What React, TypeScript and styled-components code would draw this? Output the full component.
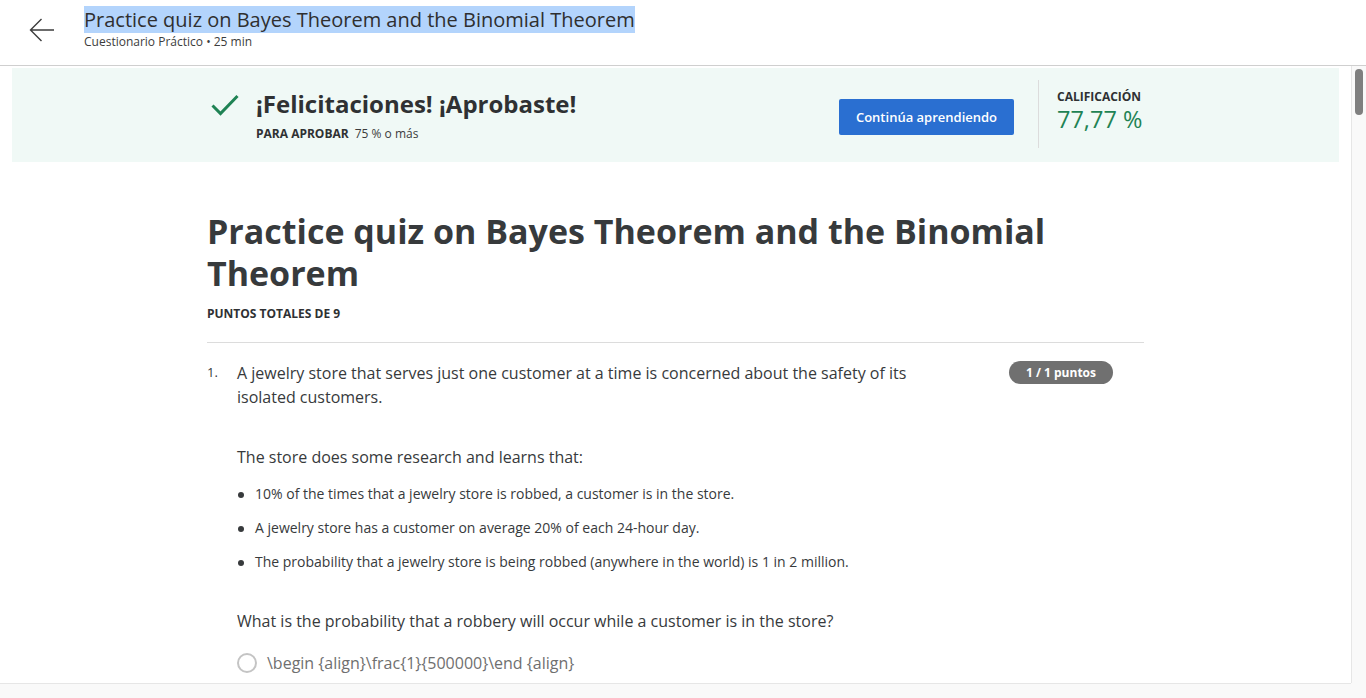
import React from "react";
import styled, { createGlobalStyle } from "styled-components";

const Global = createGlobalStyle`
  html, body { margin: 0; padding: 0; height: 100%; overflow: hidden; }
  body { font-family: "Open Sans", "Noto Sans", sans-serif; color: #373a3c; background: #fff; }
  * { box-sizing: border-box; }
`;

const Shell = styled.div`
  display: flex;
  flex-direction: column;
  height: 698px;
  width: 1366px;
`;

const Header = styled.header`
  flex: 0 0 66px;
  display: flex;
  align-items: flex-start;
  border-bottom: 1px solid #cfcfcf;
  padding: 8px 0 0 28px;
`;

const BackButton = styled.button`
  border: 0;
  background: none;
  padding: 0;
  margin: 9px 28px 0 0;
  width: 28px;
  height: 26px;
  display: flex;
  align-items: center;
  justify-content: center;
  color: #3d3d3d;
  cursor: pointer;
`;

const HeaderText = styled.div`
  display: flex;
  flex-direction: column;
`;

const HeaderTitle = styled.h1`
  margin: 0;
  font-size: 20px;
  line-height: 24px;
  font-weight: 400;
  color: #2f2f2f;
  span { background: #b3d4fc; }
`;

const HeaderSub = styled.div`
  font-size: 12px;
  line-height: 16px;
  color: #3c3c3c;
  margin-top: 2px;
`;

const Viewport = styled.div`
  flex: 1;
  min-height: 0;
  display: grid;
  grid-template-columns: 1fr 15px;
  grid-template-rows: 1fr 15px;
`;

const Pane = styled.main`
  overflow: hidden;
  min-height: 0;
`;

const VTrack = styled.div`
  background: #f9f9f9;
  border-left: 1px solid #e6e6e6;
  padding: 3px 3px 0 3px;
`;

const VThumb = styled.div`
  height: 46px;
  border-radius: 4px;
  background: #7f7f7f;
`;

const HTrack = styled.div`
  background: #f9f9f9;
  border-top: 1px solid #e6e6e6;
`;

const Corner = styled.div`
  background: #f9f9f9;
`;

const Banner = styled.section`
  margin: 2px 12px 0 12px;
  background: #f0f9f6;
  height: 94px;
  display: flex;
  justify-content: center;
`;

const BannerInner = styled.div`
  width: 937px;
  display: flex;
  align-items: stretch;
`;

const PassBlock = styled.div`
  flex: 1;
  display: flex;
  align-items: flex-start;
  padding-top: 22px;
`;

const CheckWrap = styled.div`
  width: 49px;
  padding: 4px 0 0 4px;
  color: #1f8354;
`;

const PassText = styled.div`
  display: flex;
  flex-direction: column;
`;

const PassTitle = styled.h2`
  margin: 0;
  font-size: 24px;
  line-height: 28px;
  font-weight: 700;
  color: #2f3133;
`;

const PassMeta = styled.div`
  margin-top: 8px;
  font-size: 12px;
  line-height: 16px;
  color: #3c3c3c;
  b { font-weight: 700; margin-right: 6px; color: #2f3133; }
`;

const ActionBlock = styled.div`
  display: flex;
  align-items: center;
  padding-right: 24px;
  padding-top: 4px;
`;

const PrimaryButton = styled.button`
  width: 175px;
  height: 36px;
  border: 0;
  border-radius: 2px;
  background: #2a6fd1;
  color: #fff;
  font-family: inherit;
  font-size: 13px;
  font-weight: 600;
  cursor: pointer;
`;

const GradeBlock = styled.div`
  border-left: 1px solid #dcdcdc;
  margin: 12px 0 14px;
  padding: 9px 0 0 18px;
  width: 106px;
  white-space: nowrap;
`;

const GradeLabel = styled.div`
  font-size: 12px;
  line-height: 16px;
  font-weight: 700;
  color: #2f3133;
`;

const GradeValue = styled.div`
  font-size: 23.5px;
  line-height: 28px;
  color: #1f8354;
`;

const Article = styled.article`
  width: 937px;
  margin: 0 auto;
  padding-top: 48px;
`;

const QuizTitle = styled.h1`
  margin: 0;
  font-size: 34px;
  line-height: 42px;
  font-weight: 700;
  color: #373a3c;
`;

const TotalPoints = styled.div`
  margin-top: 12px;
  font-size: 12px;
  line-height: 16px;
  font-weight: 700;
  color: #2f3133;
  padding-bottom: 20px;
  border-bottom: 1px solid #dcdcdc;
`;

const Question = styled.div`
  display: flex;
  padding-top: 18px;
`;

const QNum = styled.div`
  width: 30px;
  font-size: 13px;
  line-height: 24px;
  color: #373a3c;
  margin-top: -1px;
`;

const QBody = styled.div`
  flex: 1;
  font-size: 16px;
  line-height: 24px;
  color: #373a3c;
`;

const QTop = styled.div`
  display: flex;
  justify-content: space-between;
  align-items: flex-start;
`;

const Prompt = styled.p`
  margin: 0;
  width: 680px;
`;

const Badge = styled.span`
  margin: 0 31px 0 0;
  height: 23px;
  padding: 0 17px;
  border-radius: 12px;
  background: #707070;
  color: #fff;
  font-size: 12px;
  font-weight: 700;
  line-height: 23px;
`;

const Para = styled.p<{ $top?: number }>`
  margin: ${(p) => p.$top ?? 36}px 0 0;
`;

const Bullets = styled.ul`
  margin: 15px 0 0;
  padding: 0 0 0 18px;
  list-style: none;
  font-size: 14px;
  line-height: 20px;
  li { position: relative; margin-bottom: 14px; }
  li::before {
    content: "";
    position: absolute;
    left: -17px;
    top: 8px;
    width: 6px;
    height: 6px;
    border-radius: 50%;
    background: #373a3c;
  }
`;

const Options = styled.div`
  margin-top: 18px;
  display: flex;
  flex-direction: column;
  gap: 16px;
`;

const Option = styled.label`
  display: flex;
  align-items: center;
  gap: 10px;
  color: #6f6f6f;
  font-size: 16px;
  line-height: 24px;
`;

const Radio = styled.span`
  width: 20px;
  height: 20px;
  border: 2px solid #c4c4c4;
  border-radius: 50%;
  background: #fff;
  flex: 0 0 20px;
`;

export default function App() {
  return (
    <>
      <Global />
      <Shell>
        <Header>
          <BackButton aria-label="Atrás">
            <svg width="26" height="24" viewBox="0 0 26 24" fill="none" stroke="currentColor" strokeWidth="1.4">
              <path d="M25 12H1.5M12.5 1L1.5 12l11 11" />
            </svg>
          </BackButton>
          <HeaderText>
            <HeaderTitle><span>Practice quiz on Bayes Theorem and the Binomial Theorem</span></HeaderTitle>
            <HeaderSub>Cuestionario Práctico • 25 min</HeaderSub>
          </HeaderText>
        </Header>
        <Viewport>
          <Pane>
            <Banner>
              <BannerInner>
                <PassBlock>
                  <CheckWrap>
                    <svg width="28" height="22" viewBox="0 0 28 22" fill="none" stroke="currentColor" strokeWidth="3">
                      <path d="M1.5 11.5l8 8L26.5 2" />
                    </svg>
                  </CheckWrap>
                  <PassText>
                    <PassTitle>¡Felicitaciones! ¡Aprobaste!</PassTitle>
                    <PassMeta><b>PARA APROBAR</b>75 % o más</PassMeta>
                  </PassText>
                </PassBlock>
                <ActionBlock>
                  <PrimaryButton>Continúa aprendiendo</PrimaryButton>
                </ActionBlock>
                <GradeBlock>
                  <GradeLabel>CALIFICACIÓN</GradeLabel>
                  <GradeValue>77,77 %</GradeValue>
                </GradeBlock>
              </BannerInner>
            </Banner>
            <Article>
              <QuizTitle>Practice quiz on Bayes Theorem and the Binomial Theorem</QuizTitle>
              <TotalPoints>PUNTOS TOTALES DE 9</TotalPoints>
              <Question>
                <QNum>1.</QNum>
                <QBody>
                  <QTop>
                    <Prompt>A jewelry store that serves just one customer at a time is concerned about the safety of its isolated customers.</Prompt>
                    <Badge>1 / 1 puntos</Badge>
                  </QTop>
                  <Para $top={36}>The store does some research and learns that:</Para>
                  <Bullets>
                    <li>10% of the times that a jewelry store is robbed, a customer is in the store.</li>
                    <li>A jewelry store has a customer on average 20% of each 24-hour day.</li>
                    <li>The probability that a jewelry store is being robbed (anywhere in the world) is 1 in 2 million.</li>
                  </Bullets>
                  <Para $top={37}>What is the probability that a robbery will occur while a customer is in the store?</Para>
                  <Options>
                    <Option><Radio />\begin {"{align}"}\frac{"{1}{500000}"}\end {"{align}"}</Option>
                  </Options>
                </QBody>
              </Question>
            </Article>
          </Pane>
          <VTrack><VThumb /></VTrack>
          <HTrack />
          <Corner />
        </Viewport>
      </Shell>
    </>
  );
}
